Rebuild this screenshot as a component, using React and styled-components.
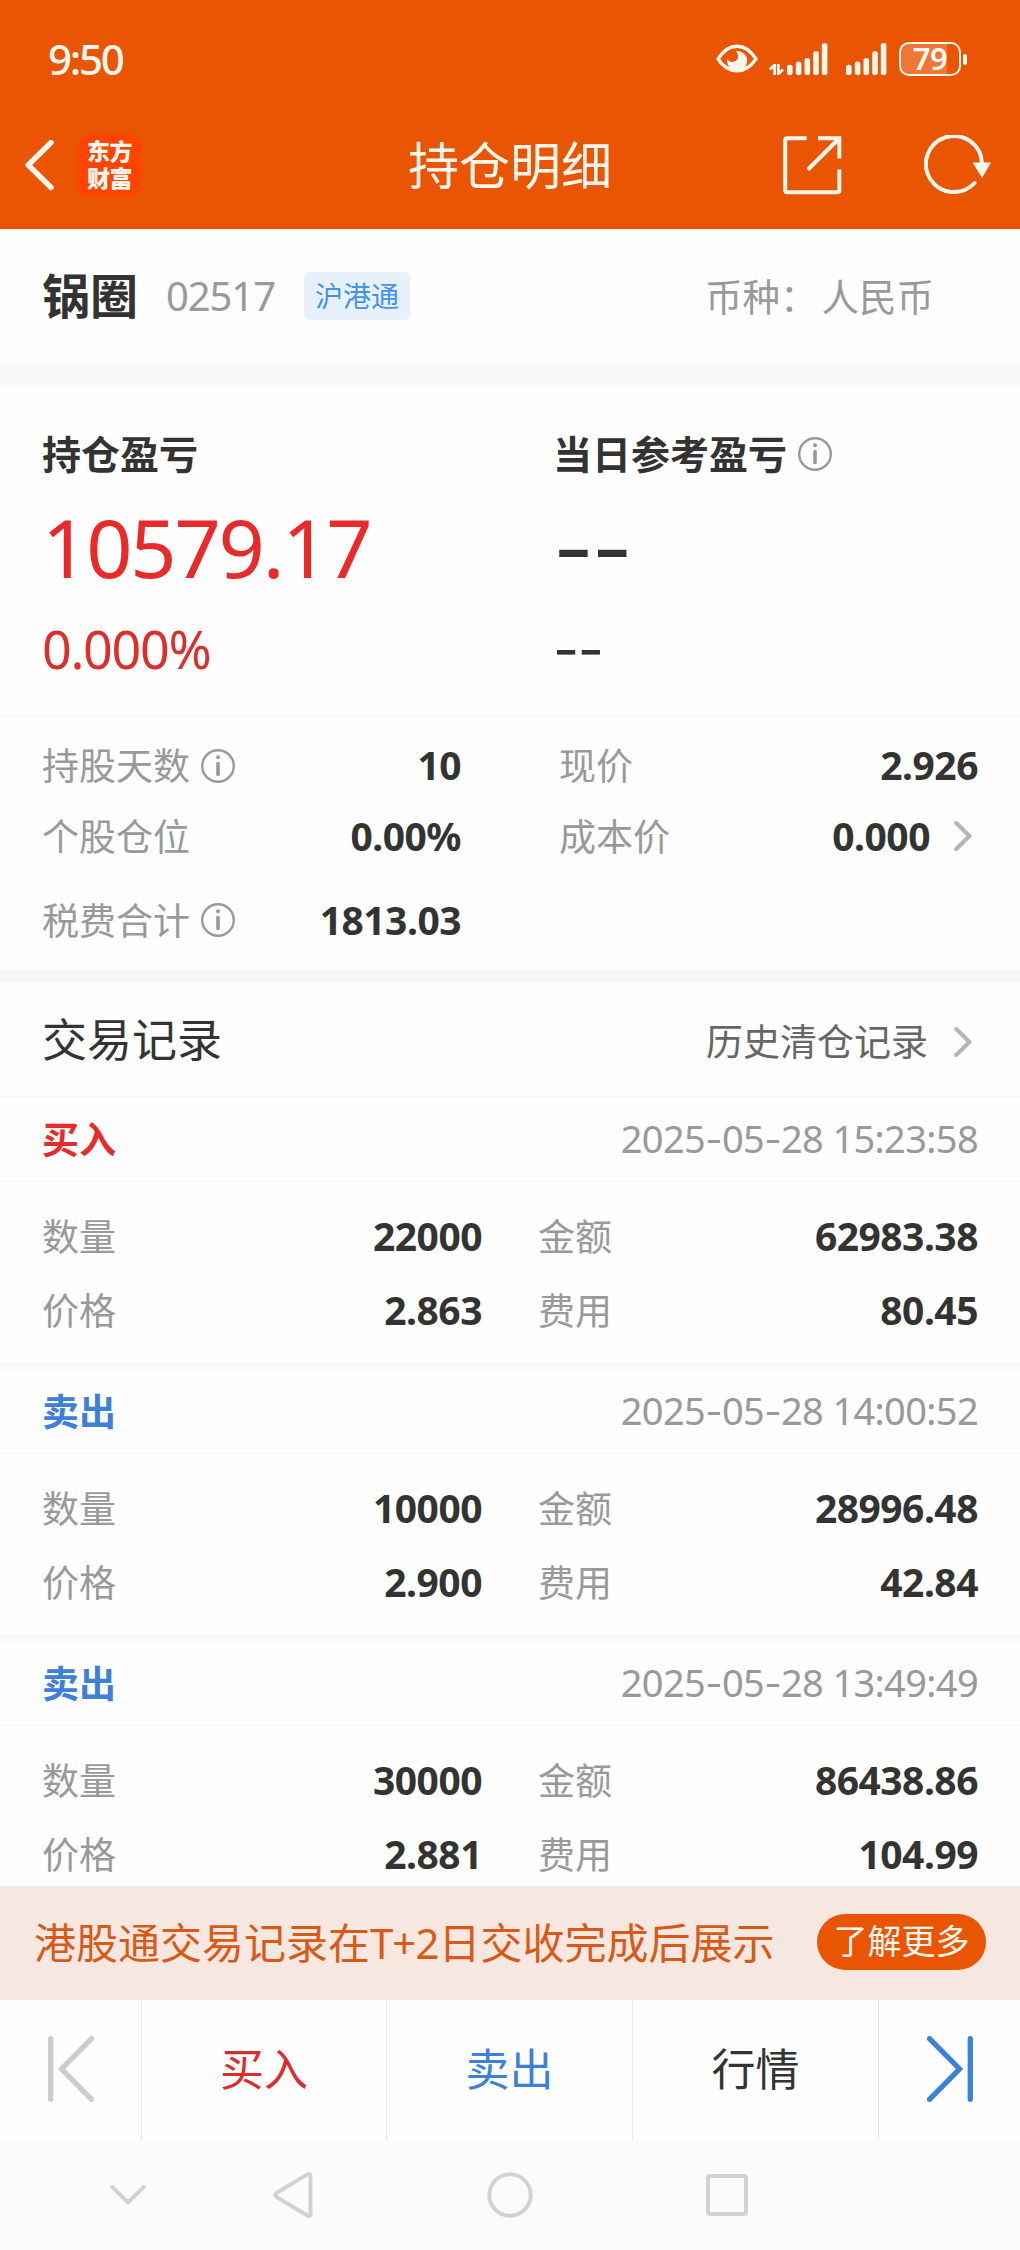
import styled, { createGlobalStyle } from "styled-components";

const ORANGE = "#ea5504"
const RED = "#e92a2a"
const BLUE = "#3d80d8"

const trades = [
    { side: "买入", color: RED, time: "2025-05-28 15:23:58", qty: "22000", amount: "62983.38", price: "2.863", fee: "80.45" },
    { side: "卖出", color: BLUE, time: "2025-05-28 14:00:52", qty: "10000", amount: "28996.48", price: "2.900", fee: "42.84" },
    { side: "卖出", color: BLUE, time: "2025-05-28 13:49:49", qty: "30000", amount: "86438.86", price: "2.881", fee: "104.99" },
]

const InfoIcon = () => (
    <svg width="34" height="34" viewBox="0 0 34 34" fill="none" stroke="#999">
        <circle cx="17" cy="17" r="15.8" strokeWidth="2.4" />
        <path d="M17 14.5V25.5" strokeWidth="3.6" strokeLinecap="round" />
        <circle cx="17" cy="8.3" r="2" fill="#999" stroke="none" />
    </svg>
)

const Chevron = () => (
    <svg width="18" height="32" viewBox="0 0 18 32" fill="none" stroke="#b5b5b5" strokeWidth="4" strokeLinecap="round" strokeLinejoin="round">
        <path d="M2.2 3L15.5 16L2.2 29" />
    </svg>
)

const Bars = () => (
    <svg width="41" height="32" viewBox="0 0 41 32" fill="#fff7ee">
        <rect x="0" y="21.7" width="5.6" height="10.3" rx="2.6" />
        <rect x="8.8" y="18.5" width="5.6" height="13.5" rx="2.6" />
        <rect x="17.5" y="15" width="5.6" height="17" rx="2.6" />
        <rect x="26.2" y="8" width="5.6" height="24" rx="2.6" />
        <rect x="34.8" y="0" width="5.6" height="32" rx="2.6" />
    </svg>
)

function StatusBar(){
    return (
        <Status>
            <Clock>9:50</Clock>
            <StatusIcons>
                <svg width="42" height="30" viewBox="0 0 42 30">
                    <path d="M2 15C7 7 13.5 2.2 21 2.2S35 7 40 15C35 22.5 28.5 26.8 21 26.8S7 22.5 2 15Z" fill="none" stroke="#fff7ee" strokeWidth="3.4" strokeLinejoin="round" />
                    <path d="M20 7A10 10 0 1 1 11.5 14.5Q13 18.5 17 17.8Q22 17 22 12.5Q22 9.5 20 7Z" fill="#fff7ee" />
                </svg>
                <SignalGroup>
                    <svg width="15" height="11" viewBox="0 0 15 11" fill="none" stroke="#fff7ee" strokeWidth="2.8">
                        <path d="M5.6 11V1L0.8 5.4M9.3 0V10L14 5.6" />
                    </svg>
                    <Bars />
                </SignalGroup>
                <Bars />
                <Battery>
                    <BatteryBody>
                        <BatteryFill />
                        <span>79</span>
                    </BatteryBody>
                    <BatteryTip />
                </Battery>
            </StatusIcons>
        </Status>
    )
}

function NavBar(){
    return (
        <Nav>
            <NavSide>
                <svg width="30" height="52" viewBox="0 0 30 52" fill="none" stroke="#fff7ee" strokeWidth="5.4" strokeLinecap="round">
                    <path d="M27 3.5L4.2 26L27 48.5" strokeLinejoin="round" />
                </svg>
                <Logo>东方财富</Logo>
            </NavSide>
            <NavTitle>持仓明细</NavTitle>
            <NavSide $end>
                <svg width="59" height="59" viewBox="0 0 59 59" fill="none" stroke="#fff7ee" strokeWidth="4">
                    <path d="M23.6 2.2H4.2Q2.2 2.2 2.2 4.2V54.3Q2.2 56.3 4.2 56.3H54.3Q56.3 56.3 56.3 54.3V33.5" />
                    <path d="M35 2.2H56.3V22.5" />
                    <path d="M54.5 4L26 32.5" strokeLinecap="round" />
                </svg>
                <svg width="68" height="60" viewBox="0 0 68 60" fill="none" stroke="#fff7ee" strokeWidth="4">
                    <path d="M50.5 48A28 28 0 1 1 57.9 28" strokeLinecap="round" />
                    <path d="M48.5 27.5H67L58 43Z" fill="#fff7ee" stroke="none" />
                </svg>
            </NavSide>
        </Nav>
    )
}

// the hyphen is set in a wider face than the digits
function Timestamp({ value }){
    const [year, month, rest] = value.split("-")

    return (
        <Time>
            { year }<Dash>-</Dash>{ month }<Dash>-</Dash>{ rest }
        </Time>
    )
}

function Field({ label, value, info, arrow }){
    return (
        <FieldRow>
            <Label>{ label }{ info && <InfoIcon /> }</Label>
            <Value $arrow={ arrow }>{ value }{ arrow && <Chevron /> }</Value>
        </FieldRow>
    )
}

function Trade({ side, color, time, qty, amount, price, fee }){
    return (
        <TradeCard>
            <TradeHead>
                <Side $color={ color }>{ side }</Side>
                <Timestamp value={ time } />
            </TradeHead>
            <TradeBody>
                <Field label="数量" value={ qty } />
                <Field label="金额" value={ amount } />
                <Field label="价格" value={ price } />
                <Field label="费用" value={ fee } />
            </TradeBody>
        </TradeCard>
    )
}

export default function App(){
    return (
        <Screen lang="zh-CN">
            <GlobalStyle />
            <Header>
                <StatusBar />
                <NavBar />
            </Header>

            <Content>
                <StockRow>
                    <StockName>锅圈</StockName>
                    <StockCode>02517</StockCode>
                    <Tag>沪港通</Tag>
                    <Currency><span>币种：</span><span>人民币</span></Currency>
                </StockRow>

                <Summary>
                    <SummaryCol>
                        <SummaryTitle>持仓盈亏</SummaryTitle>
                        <Profit>10579.17</Profit>
                        <Percent>0.000%</Percent>
                    </SummaryCol>
                    <SummaryCol>
                        <SummaryTitle>当日参考盈亏<InfoIcon /></SummaryTitle>
                        <EmptyValue $large>--</EmptyValue>
                        <EmptyValue>--</EmptyValue>
                    </SummaryCol>
                </Summary>

                <Details>
                    <Field label="持股天数" value="10" info />
                    <Field label="现价" value="2.926" />
                    <Field label="个股仓位" value="0.00%" />
                    <Field label="成本价" value="0.000" arrow />
                    <Field label="税费合计" value="1813.03" info />
                </Details>

                <RecordsHead>
                    <h2>交易记录</h2>
                    <HistoryLink>历史清仓记录<Chevron /></HistoryLink>
                </RecordsHead>
                { trades.map((trade) => <Trade key={ trade.time } { ...trade } />) }
            </Content>

            <Banner>
                <BannerText>港股通交易记录在<em>T+2</em>日交收完成后展示</BannerText>
                <MoreButton>了解更多</MoreButton>
            </Banner>

            <Actions>
                <Action>
                    <svg width="46" height="66" viewBox="0 0 46 66" fill="none" stroke="#ccc" strokeWidth="5.3" strokeLinecap="round">
                        <path d="M2.7 2.7V63.3M43.5 2.7L13.5 33L43.5 63.3" />
                    </svg>
                </Action>
                <Action $color="#d82e2e">买入</Action>
                <Action $color={ BLUE }>卖出</Action>
                <Action $color="#333">行情</Action>
                <Action>
                    <svg width="46" height="66" viewBox="0 0 46 66" fill="none" stroke={ BLUE } strokeWidth="5.3" strokeLinecap="round">
                        <path d="M43.3 2.7V63.3M2.5 2.7L32.5 33L2.5 63.3" />
                    </svg>
                </Action>
            </Actions>

            <SystemNav>
                <svg width="36" height="20" viewBox="0 0 36 20"><path d="M2.2 2L18 17.5L33.8 2" /></svg>
                <svg width="40" height="46" viewBox="0 0 40 46"><path d="M34.3 2.4Q37.5 1 37.5 4.5V41.5Q37.5 45 34.3 43.5L3.5 25Q1 23 3.5 21Z" /></svg>
                <svg width="46" height="46" viewBox="0 0 46 46"><circle cx="23" cy="23" r="20.7" /></svg>
                <svg width="42" height="42" viewBox="0 0 42 42"><rect x="2" y="2" width="38" height="38" rx="2" /></svg>
            </SystemNav>
        </Screen>
    )
}

const GlobalStyle = createGlobalStyle`
  *{
    box-sizing: border-box;
  }

  body{
    margin: 0;
    background: #fefefe;
  }

  h1, h2, p{
    margin: 0;
    font-weight: 400;
  }

  svg{
    display: block;
    flex: none;
  }
`

const Screen = styled.div`
  display: flex;
  flex-direction: column;
  width: 1020px;
  height: 2250px;
  overflow: hidden;
  background: #fefefe;
  color: #333;
  font-family: "Noto Sans", "Noto Sans CJK SC", sans-serif;
  font-size: 37px;
  line-height: 1;
  white-space: nowrap;
`

const Header = styled.header`
  flex: none;
  height: 229px;
  background: ${ORANGE};
  color: #fff7ee;
`

const Status = styled.div`
  display: flex;
  align-items: center;
  justify-content: space-between;
  height: 118px;
  padding: 0 53px 0 48px;
`

const Clock = styled.span`
  font-size: 42px;
  font-weight: 500;
  letter-spacing: -2.2px;
`

const StatusIcons = styled.div`
  display: flex;
  align-items: center;
  gap: 18px;
`

const SignalGroup = styled.div`
  display: flex;
  align-items: flex-end;
  gap: 3px;
  margin-left: -7px;
`

const Battery = styled.div`
  display: flex;
  align-items: center;
  gap: 2px;
  margin-left: -6px;
`

const BatteryBody = styled.div`
  display: grid;
  place-items: center;
  width: 62px;
  height: 34px;
  border: 2.5px solid #fff7ee;
  border-radius: 10px;
  font-size: 31px;
  font-weight: 600;

  > *{
    grid-area: 1 / 1;
  }

  span{
    margin-top: -1px;
    letter-spacing: -0.5px;
  }
`

const BatteryFill = styled.div`
  justify-self: start;
  width: 79%;
  height: 30px;
  border-radius: 7px 0 0 7px;
  background: rgb(255 255 255 / 20%);
`

const BatteryTip = styled.div`
  width: 4px;
  height: 11px;
  border-radius: 2px;
  background: #fff7ee;
`

const Nav = styled.div`
  display: grid;
  grid-template-columns: 1fr auto 1fr;
  align-items: center;
  height: 94px;
  padding: 0 28px 0 24px;
`

const NavSide = styled.div`
  display: flex;
  align-items: center;
  justify-content: ${({ $end }) => $end ? "flex-end" : "flex-start"};
  gap: ${({ $end }) => $end ? "82px" : "24px"};
`

const Logo = styled.div`
  width: 63px;
  height: 63px;
  padding: 4px 8px 5px 9px;
  border-radius: 12px;
  background: #ff4400;
  font-size: 23px;
  font-weight: 900;
  letter-spacing: -0.5px;
  line-height: 27px;
  white-space: normal;
  word-break: break-all;
`

const NavTitle = styled.h1`
  padding-left: 4px;
  font-size: 51px;
`

const Content = styled.main`
  flex: none;
  height: 1657px;
  overflow: hidden;
`

const StockRow = styled.section`
  display: flex;
  align-items: center;
  height: 156px;
  padding: 0 86px 0 42px;
  border-bottom: 23px solid #f6f8fa;
`

const StockName = styled.h2`
  font-size: 48px;
  font-weight: 700 !important;
`

const StockCode = styled.span`
  width: 138px;
  margin-left: 28px;
  color: #999;
  font-size: 40px;
  letter-spacing: -1.1px;
`

const Tag = styled.span`
  display: grid;
  place-items: center;
  width: 106px;
  height: 48px;
  border-radius: 6px;
  background: #e8f1fb;
  color: #4494ea;
  font-size: 28px;
`

const Currency = styled.p`
  display: flex;
  gap: 4px;
  margin-left: auto;
  padding-top: 2px;
  color: #999;
  font-size: 37.5px;
`

const Summary = styled.section`
  display: grid;
  grid-template-columns: 511px 1fr;
  height: 332px;
  padding: 0 42px;
  border-bottom: 1px solid #f3f4f5;
`

const SummaryCol = styled.div`
  display: grid;
  grid-template-rows: 39px 70px 50px;
  row-gap: 30px;
  align-items: center;
  align-content: start;
  padding-top: 49px;
`

const SummaryTitle = styled.h2`
  display: flex;
  align-items: center;
  gap: 11px;
  font-size: 39px;
  font-weight: 700 !important;
`

const Profit = styled.p`
  margin-top: 16px;
  color: ${RED};
  font-size: 81px;
  letter-spacing: -2.2px;
`

const Percent = styled.p`
  margin-top: 41px;
  color: #dd2e2e;
  font-size: 52px;
  letter-spacing: -1.3px;
`

const EmptyValue = styled.p`
  margin-top: ${({ $large }) => $large ? "21px" : "42px"};
  font-family: Inter, sans-serif;
  font-size: ${({ $large }) => $large ? "89px" : "57px"};
  letter-spacing: -0.025em;
`

const FieldRow = styled.div`
  display: flex;
  align-items: center;
  justify-content: space-between;
`

const Label = styled.span`
  display: flex;
  align-items: center;
  gap: 11px;
  color: #999;
`

const Value = styled.span`
  display: flex;
  align-items: center;
  gap: 24px;
  padding-right: ${({ $arrow }) => $arrow ? "6px" : "0"};
  padding-bottom: 2px;
  font-size: 39px;
  font-weight: 700;
  letter-spacing: -0.5px;
`

const Details = styled.section`
  display: grid;
  grid-template-columns: 419px 419px;
  grid-template-rows: 71px 71px 96px;
  column-gap: 98px;
  height: 266px;
  padding: 13px 42px 0;
  border-bottom: 14px solid #f6f8fa;
`

const RecordsHead = styled.div`
  display: flex;
  align-items: center;
  justify-content: space-between;
  height: 114px;
  padding: 0 48px 0 42px;
  border-bottom: 1px solid #f3f4f5;

  h2{
    font-size: 45px;
  }
`

const HistoryLink = styled.a`
  display: flex;
  align-items: center;
  gap: 26px;
  padding-top: 4px;
  color: #666;
`

const TradeCard = styled.article`
  height: 272px;
  border-bottom: 6px solid #f6f8fa;
`

const TradeHead = styled.div`
  display: flex;
  align-items: center;
  justify-content: space-between;
  height: 85px;
  padding: 0 42px;
  border-bottom: 1px solid #f3f4f5;
`

const Side = styled.span`
  color: ${({ $color }) => $color};
  font-weight: 700;
`

const Time = styled.time`
  padding-bottom: 1px;
  color: #999;
  font-size: 38px;
  letter-spacing: -0.65px;
`

const Dash = styled.span`
  font-family: Inter, sans-serif;
`

const TradeBody = styled.div`
  display: grid;
  grid-template-columns: 440px 440px;
  grid-template-rows: 74px 74px;
  column-gap: 56px;
  padding: 17px 42px;
`

const Banner = styled.div`
  display: flex;
  flex: none;
  align-items: center;
  justify-content: space-between;
  height: 114px;
  padding: 0 34px;
  background: #f6e7e0;
`

const BannerText = styled.p`
  color: #d95a18;
  font-size: 42px;

  em{
    font-style: normal;
    letter-spacing: -1px;
  }
`

const MoreButton = styled.button`
  display: grid;
  place-items: center;
  width: 169px;
  height: 56px;
  margin-top: -2px;
  padding: 0 0 2px;
  border: 0;
  border-radius: 28px;
  background: ${ORANGE};
  color: #fff7ee;
  font: inherit;
  font-size: 34px;
`

const Actions = styled.div`
  display: grid;
  flex: none;
  grid-template-columns: 142px 245px 246px 246px 141px;
  height: 140px;
`

const Action = styled.div`
  display: flex;
  align-items: center;
  justify-content: center;
  padding-bottom: 2px;
  border-right: 1px solid #e8e8e8;
  color: ${({ $color }) => $color};
  font-size: 44px;

  &:last-child{
    border-right: 0;
  }
`

const SystemNav = styled.nav`
  display: grid;
  flex: none;
  grid-template-columns: 256px 73px 361px 74px;
  align-items: center;
  justify-items: center;
  height: 110px;
  background: #fbfbfb;

  svg{
    fill: none;
    stroke: #d2d2d2;
    stroke-width: 4;
    stroke-linecap: round;
    stroke-linejoin: round;
  }
`
